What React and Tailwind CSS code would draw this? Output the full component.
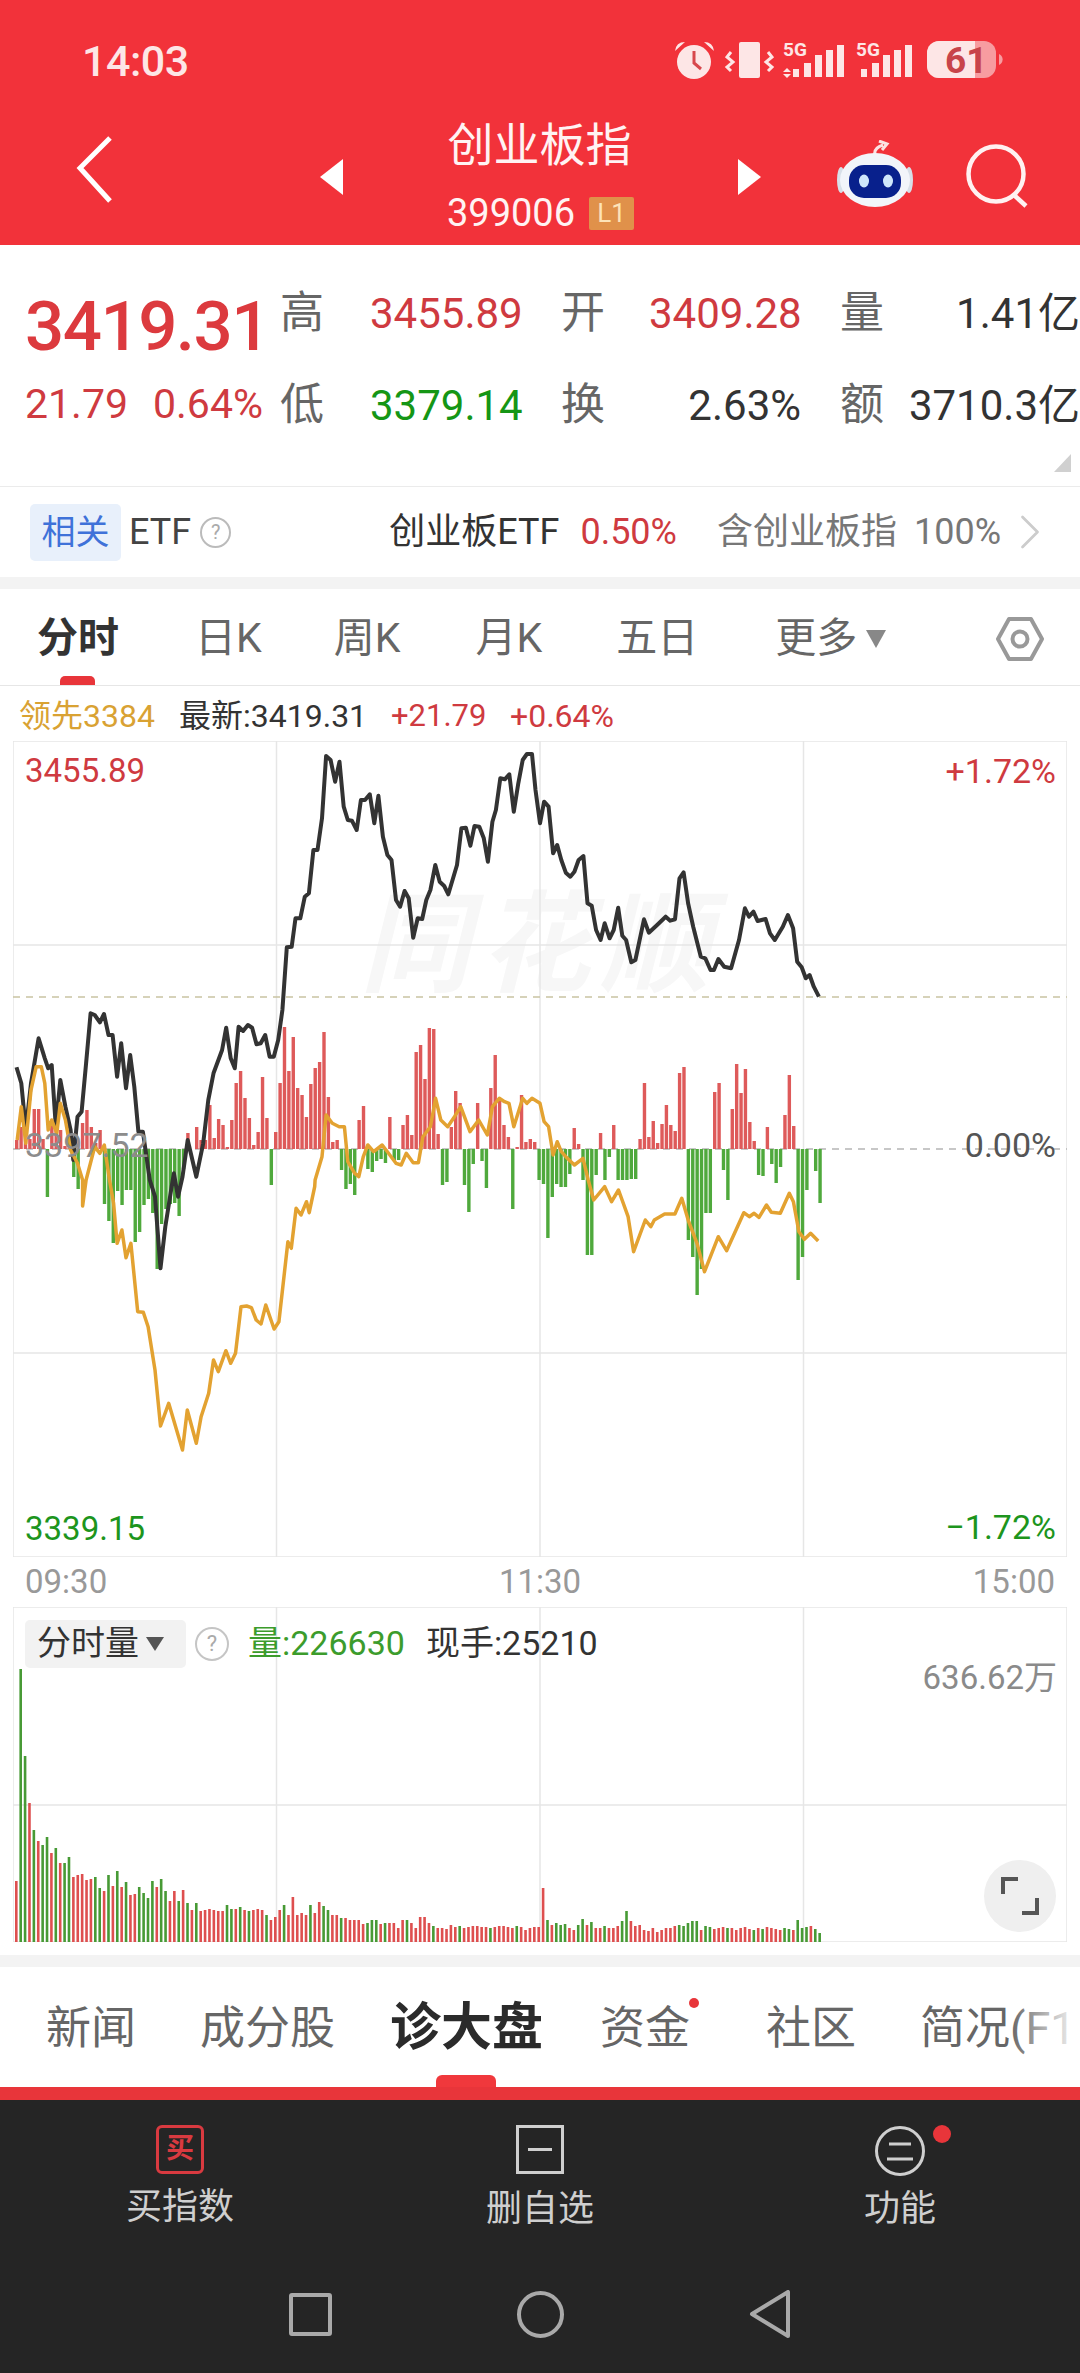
import { ChevronRight } from 'lucide-react'

// points read off the reference crops, stored in crop units and converted to page pixels
const z3 = (pts) => pts.map(([x, y]) => [x / 2.904, 730 + y / 3])
const z4 = (pts) => pts.map(([x, y]) => [540 + x / 2.904, 730 + y / 3])
const z5 = (pts) => pts.map(([x, y]) => [x / 1.452, 1180 + y / 3])
const toPoints = (pts) => pts.map(([x, y]) => `${x.toFixed(1)},${y.toFixed(1)}`).join(' ')

const priceLine = [
  ...z3([[48,1012],[62,1060],[75,1200],[90,1060],[112,925],[130,985],[140,1015],[150,1005],[162,1190],[175,1050],[190,1130],[205,1200],[213,1290],[225,1160],[237,1145],[250,1000],[263,850],[275,855],[290,877],[302,852],[315,915],[327,915],[340,1040],[352,940],[366,1075],[378,975],[390,1070],[402,1205],[415,1205],[435,1350]]),
  ...z5([[225,50],[233,265],[240,140],[250,10]]),
  ...z3([[505,1330],[517,1400],[530,1340],[545,1230],[570,1340],[590,1240],[605,1110],[620,1030],[645,960],[657,893],[670,985],[682,1015],[693,890],[706,903],[720,885],[732,893],[745,943],[757,940],[770,915],[783,980],[795,980],[808,930],[820,840],[833,652],[847,650],[858,565],[872,565],[885,500],[897,490],[910,360],[922,360],[935,265],[947,78],[960,90],[973,155],[986,95],[998,230],[1010,270],[1022,272],[1036,300],[1048,210],[1060,210],[1074,193],[1087,280],[1099,197],[1112,320],[1125,375],[1137,390],[1150,510],[1162,530],[1175,483],[1187,505],[1200,623],[1213,565],[1226,567],[1238,510],[1250,480],[1264,405],[1277,455],[1290,468],[1302,493],[1327,405],[1340,295],[1353,293],[1366,347],[1378,288],[1392,290],[1405,325],[1417,395],[1430,275],[1440,240],[1453,145],[1466,148],[1479,133],[1492,245],[1505,160],[1518,90],[1530,72],[1545,72],[1555,180]]),
  ...z4([[0,280],[12,215],[25,230],[38,370],[50,345],[62,390],[75,428],[88,440],[100,425],[112,390],[126,378],[138,520],[150,527],[163,600],[176,630],[188,580],[202,625],[214,600],[227,533],[239,617],[250,630],[265,697],[277,690],[302,568],[316,608],[340,585],[365,560],[378,572],[392,568],[405,445],[417,427],[430,520],[445,590],[467,680],[480,685],[495,720],[505,720],[518,687],[535,710],[555,715],[578,630],[595,535],[607,560],[620,545],[632,573],[655,567],[668,610],[682,630],[705,590],[720,555],[735,595],[747,695],[760,712],[772,745],[783,735],[795,770],[810,800]]),
]

const leadLine = [
  ...z3([[50,1230],[62,1130],[75,1240],[90,1080],[105,1010],[120,1010],[130,1060],[140,1200],[150,1170],[165,1210],[175,1120],[190,1170],[205,1260],[225,1300],[240,1350]]),
  ...z5([[120,78]]),
  ...z3([[250,1350],[275,1250],[290,1270],[303,1245],[318,1350]]),
  ...z5([[165,70],[170,190],[177,150],[183,233],[190,190],[200,395],[208,397],[215,440],[225,570],[233,738],[245,670],[265,810],[272,690],[285,790],[292,710],[303,640],[310,540],[317,575],[328,512],[335,550],[342,520],[350,380],[358,378],[365,383],[372,420],[379,432],[386,375],[398,447],[405,425],[418,185],[423,205],[430,85],[437,105],[445,65],[449,98],[457,20]]),
  ...z3([[915,1350],[935,1280],[947,1155],[965,1180],[985,1190],[1000,1190],[1010,1295],[1030,1330],[1042,1340],[1055,1280],[1068,1245],[1085,1265],[1110,1245],[1125,1265],[1150,1300],[1165,1305],[1180,1270],[1200,1298],[1215,1298],[1228,1220],[1250,1190],[1265,1105],[1280,1170],[1300,1190],[1320,1160],[1338,1130],[1365,1205],[1390,1170],[1415,1215],[1430,1130],[1450,1105],[1465,1115],[1478,1120],[1492,1190],[1518,1105],[1530,1120],[1545,1105]]),
  ...z4([[0,1120],[12,1175],[25,1190],[38,1275],[50,1235],[62,1265],[75,1280],[100,1305],[125,1285],[140,1350]]),
  ...z5([[862,60],[878,20],[888,65],[898,30],[912,110],[920,215],[937,120],[945,140],[950,120],[965,102],[980,102],[990,55],[1000,125],[1012,190],[1023,275],[1043,170],[1055,212],[1080,98],[1088,110],[1095,100],[1102,112],[1113,75],[1120,97],[1133,100],[1146,40],[1152,65],[1160,155],[1168,178],[1177,160],[1188,183]]),
]

// + is a red bar above the zero line, - a green one below
const flow = [9,22,16,10,40,40,10,-48,29,19,19,3,2,-28,-40,26,39,22,6,19,-55,-72,-94,-42,-56,-41,-41,-93,-83,-56,-50,-64,-120,-75,-60,-55,-54,-67,-20,16,0,22,9,9,44,11,30,24,2,29,66,78,51,31,4,17,72,31,-36,17,66,122,78,112,61,54,32,65,81,87,117,52,7,9,-21,-40,-35,-46,29,43,-20,-23,-12,-10,-14,32,-11,-11,24,34,14,97,104,70,121,120,15,-36,-33,22,58,46,-36,-63,-15,46,-12,-39,61,94,49,24,12,-60,2,54,7,10,7,-31,-35,-89,-48,-35,-38,-38,-25,21,5,-31,-106,-106,-26,16,-31,-8,24,-31,-31,-31,-30,-30,10,66,12,28,6,25,44,24,18,76,82,-91,-108,-146,-120,-64,-64,57,66,-21,-51,40,85,56,80,27,8,-26,-27,22,-15,-34,-18,34,74,23,-131,-108,-41,0,-22,-54]

const volume = [61,-273,-186,139,-112,101,-97,-105,89,-94,79,-79,-85,65,67,68,62,63,-65,-54,51,-67,56,-71,55,-60,47,48,-55,-49,-44,-61,55,-63,-51,41,51,-41,52,-39,32,-39,31,32,33,32,31,31,-37,-33,33,-35,32,-31,32,33,32,-27,22,25,32,-37,27,45,27,29,27,-37,29,40,-36,-32,27,27,-24,24,22,22,22,18,-19,-22,-22,18,-19,19,19,14,22,-22,19,14,25,25,19,-16,14,14,13,17,15,-16,14,15,16,16,15,15,-14,15,16,16,15,14,-16,15,12,14,15,15,54,-22,17,-19,-17,-18,14,12,-17,-23,17,-20,14,14,-16,14,14,16,-21,-31,21,16,17,12,11,14,10,12,14,14,16,-17,-16,-19,-21,-21,12,-16,-15,13,14,15,-14,14,12,14,15,13,-12,14,-13,15,14,13,12,-14,-13,12,-22,-14,-15,16,-13,-9]

const STEP = 4.39

function Grid({ top, bottom, mid }) {
  return (
    <g stroke="#e6e6e6" strokeWidth="1.5">
      <line x1="276.5" x2="276.5" y1={top} y2={bottom} />
      <line x1="540" x2="540" y1={top} y2={bottom} />
      <line x1="803.5" x2="803.5" y1={top} y2={bottom} />
      {mid.map((y) => <line key={y} x1="13" x2="1067" y1={y} y2={y} />)}
    </g>
  )
}

function StatusBar() {
  return (
    <div className="h-[108px] flex items-center pt-[14px] pl-[82px] text-[#fde6e6]">
      <span className="text-[43px] font-medium leading-none tracking-[-0.5px]">14:03</span>
      <svg className="ml-[484px]" width="330" height="44" viewBox="670 40 330 44">
        <g fill="#fde6e6">
          <circle cx="691" cy="63" r="17" />
          <path d="M672 52 q1 -9 10 -9 z M711 52 q-1 -9 -10 -9 z" />
          <path d="M691 52 v12 l7 6" fill="none" stroke="#d8474c" strokeWidth="3" />
          <rect x="736" y="43" width="21" height="36" rx="2" />
          <path d="M728 53 l-4 5 6 5 -6 5 4 4 M765 53 l4 5 -6 5 6 5 -4 4" fill="none" stroke="#fde6e6" strokeWidth="3" />
          <rect x="790" y="70" width="6" height="8" />
          <rect x="801" y="64" width="7" height="14" />
          <rect x="812" y="56" width="7" height="22" />
          <rect x="823" y="51" width="7" height="27" />
          <rect x="834" y="46" width="7" height="32" />
          <path d="M784 69 l4 4 h-8 z M784 79 l4 -4 h-8 z" />
          <rect x="858" y="70" width="6" height="8" />
          <rect x="869" y="64" width="7" height="14" />
          <rect x="880" y="56" width="7" height="22" />
          <rect x="891" y="51" width="7" height="27" />
          <rect x="902" y="46" width="7" height="32" />
          <rect x="924" y="42" width="69" height="37" rx="12" fill="#f79ca0" />
          <path d="M936 42 h36 v37 h-36 a12 12 0 0 1 -12 -12 v-13 a12 12 0 0 1 12 -12 z" />
          <path d="M996 55 a6 6 0 0 1 0 11 z" fill="#f79ca0" />
          <text x="780" y="57" fontSize="19" fontWeight="700">5G</text>
          <text x="853" y="57" fontSize="19" fontWeight="700">5G</text>
          <text x="942" y="74" fontSize="37" fontWeight="700" fill="#c8444a">61</text>
        </g>
      </svg>
    </div>
  )
}

function NavBar() {
  return (
    <div className="relative h-[137px]">
      <svg className="absolute left-[70px] top-[25px]" width="50" height="75" viewBox="0 0 50 75">
        <path d="M40 5 L10 35 L40 68" fill="none" stroke="#fff" strokeWidth="5" />
      </svg>
      <div className="flex justify-center items-center h-full">
        <span className="w-0 h-0 border-y-[18px] border-y-transparent border-r-[23px] border-r-white mr-[105px]" />
        <div className="flex flex-col items-center w-[184px] self-start pt-[12px]">
          <span className="text-[46px] leading-[50px] text-[#fff3f3] whitespace-nowrap">创业板指</span>
          <div className="flex items-center gap-[14px] mt-[24px] ml-[2px]">
            <span className="text-[38px] leading-[38px] text-[#fff3f3]">399006</span>
            <span className="w-[45px] h-[33px] rounded-[2px] bg-[#e0914a] text-[#fde3b8] text-[26px] leading-[33px] text-center">L1</span>
          </div>
        </div>
        <span className="w-0 h-0 border-y-[18px] border-y-transparent border-l-[23px] border-l-white ml-[106px]" />
      </div>
      <svg className="absolute left-[836px] top-[32px]" width="78" height="70" viewBox="0 0 78 70">
        <path d="M39 16 q-2 -8 8 -11 M43 1 l8 3 -5 6" fill="none" stroke="#fbe3e3" strokeWidth="3" />
        <ellipse cx="5" cy="40" rx="4" ry="13" fill="#d7dfe8" />
        <ellipse cx="73" cy="40" rx="4" ry="13" fill="#d7dfe8" />
        <ellipse cx="39" cy="40" rx="35" ry="27" fill="#f2f5fa" />
        <rect x="13" y="25" width="52" height="33" rx="15" fill="#08208c" />
        <ellipse cx="28" cy="41" rx="5" ry="6.5" fill="#cfe6fb" />
        <ellipse cx="52" cy="41" rx="5" ry="6.5" fill="#cfe6fb" />
      </svg>
      <svg className="absolute left-[964px] top-[34px]" width="68" height="66" viewBox="0 0 68 66">
        <circle cx="32" cy="32" r="27.5" fill="none" stroke="#fff1f1" strokeWidth="4.5" />
        <path d="M50 53 l12 11" fill="none" stroke="#fff1f1" strokeWidth="4.5" />
      </svg>
    </div>
  )
}

function Quote() {
  return (
    <div className="relative h-[242px] bg-white pl-[25px] border-b border-[#ebebeb]">
      <div className="pt-[22px] grid grid-cols-[255px_90px_152px_39px_88px_152px_39px_240px] grid-rows-[92px_92px] items-center text-[42px] text-[#333]">
        <span className="text-[69px] font-medium tracking-[-1.5px] text-[#dc3a3e] pt-[26px] leading-none">3419.31</span>
        <span className="text-[#666] text-[44px]">高</span>
        <span className="text-[#cf3a40]">3455.89</span>
        <span />
        <span className="text-[#666] text-[44px]">开</span>
        <span className="text-[#cf3a40] text-right">3409.28</span>
        <span />
        <div className="flex justify-between items-center"><span className="text-[#666] text-[44px]">量</span><span>1.41亿</span></div>

        <div className="flex gap-[25px] text-[#cf3a40] text-[41px]"><span>21.79</span><span>0.64%</span></div>
        <span className="text-[#666] text-[44px]">低</span>
        <span className="text-[#159615]">3379.14</span>
        <span />
        <span className="text-[#666] text-[44px]">换</span>
        <span className="text-right">2.63%</span>
        <span />
        <div className="flex justify-between items-center"><span className="text-[#666] text-[44px]">额</span><span>3710.3亿</span></div>
      </div>
      <span className="absolute right-[9px] bottom-[14px] w-0 h-0 border-l-[17px] border-l-transparent border-b-[18px] border-b-[#d0d0d0]" />
    </div>
  )
}

function EtfRow() {
  return (
    <div className="h-[90px] flex items-center pl-[30px] text-[36px]">
      <span className="w-[91px] h-[57px] bg-[#e8f0fb] rounded-[5px] text-[#3f72d9] text-[34px] text-center leading-[57px]">相关</span>
      <span className="ml-[8px] text-[#444]">ETF</span>
      <span className="ml-[9px] w-[31px] h-[31px] rounded-full border-2 border-[#bbb] text-[#aaa] text-[20px] leading-[27px] text-center">?</span>
      <span className="ml-[158px] text-[#333]">创业板ETF</span>
      <span className="ml-[21px] text-[#cf3a40]">0.50%</span>
      <span className="ml-[40px] text-[#777]">含创业板指</span>
      <span className="ml-[17px] text-[#777]">100%</span>
      <ChevronRight className="-ml-[1px] text-[#ccc]" size={60} strokeWidth={1.1} />
    </div>
  )
}

function PeriodTabs() {
  const tabs = [['日K', 'ml-[76px]'], ['周K', 'ml-[72px]'], ['月K', 'ml-[75px]'], ['五日', 'ml-[74px]'], ['更多', 'ml-[77px]']]
  return (
    <div className="relative h-[97px] flex items-center pl-[37px] pt-[4px] text-[41px] text-[#666] border-b border-[#e6e6e6]">
      <span className="font-bold text-[#333]">分时</span>
      {tabs.map(([t, cls]) => <span key={t} className={cls}>{t}</span>)}
      <span className="ml-[9px] w-0 h-0 border-x-[10px] border-x-transparent border-t-[18px] border-t-[#888]" />
      <svg className="ml-[110px]" width="48" height="46" viewBox="0 0 48 46">
        <path d="M13 3 H35 L46 23 L35 43 H13 L2 23 Z" fill="none" stroke="#999" strokeWidth="4" strokeLinejoin="round" />
        <circle cx="24" cy="23" r="7.5" fill="none" stroke="#999" strokeWidth="4" />
      </svg>
      <span className="absolute left-[60px] bottom-0 w-[35px] h-[9px] rounded-t-[5px] bg-[#e8353a]" />
    </div>
  )
}

function Legend() {
  return (
    <div className="h-[55px] flex items-center pl-[19px] pt-[5px] text-[32px] text-[#333]">
      <span className="text-[#d9a233] w-[160px]">领先3384</span>
      <span className="w-[212px]">最新:3419.31</span>
      <span className="text-[#cf3a40] w-[119px] text-[31px]">+21.79</span>
      <span className="text-[#cf3a40]">+0.64%</span>
    </div>
  )
}

function TimeChart() {
  return (
    <div className="relative ml-[13px] w-[1054px] h-[816px] text-[33px]">
      <span className="absolute left-[347px] top-[122px] text-[110px] font-bold italic text-[#f7f7f7] tracking-[10px]">同花顺</span>
      <svg className="absolute inset-0" width="1054" height="816" viewBox="13 741 1054 816">
        <Grid top={741} bottom={1557} mid={[945, 1353]} />
        <rect x="13" y="741" width="1054" height="816" fill="none" stroke="#e6e6e6" strokeWidth="1.5" />
        <line x1="13" x2="1067" y1="997" y2="997" stroke="#c9c3a3" strokeWidth="1.5" strokeDasharray="7 6" />
        <line x1="13" x2="1067" y1="1149" y2="1149" stroke="#b5b5b5" strokeWidth="1.5" strokeDasharray="7 6" />
        {flow.map((v, i) => v !== 0 && (
          <rect
            key={i}
            x={15 + i * STEP}
            y={v > 0 ? 1149 - v : 1149}
            width="3.4"
            height={Math.abs(v)}
            fill={v > 0 ? '#de5a5a' : '#4fa93c'}
          />
        ))}
        <polyline points={toPoints(priceLine)} fill="none" stroke="#333" strokeWidth="4" strokeLinejoin="round" />
        <polyline points={toPoints(leadLine)} fill="none" stroke="#e3a231" strokeWidth="3.5" strokeLinejoin="round" />
      </svg>
      <span className="absolute left-[12px] top-[5px] text-[#cf3a40]">3455.89</span>
      <span className="absolute right-[11px] top-[5px] text-[#cf3a40] text-[34px]">+1.72%</span>
      <span className="absolute left-[12px] top-[379px] text-[#8c8c8c] text-[34px]">3397.52</span>
      <span className="absolute right-[11px] top-[385px] text-[#555] text-[34px] leading-[38px]">0.00%</span>
      <span className="absolute left-[12px] bottom-[4px] text-[#1d951d]">3339.15</span>
      <span className="absolute right-[11px] bottom-[4px] text-[#1d951d] text-[34px]">−1.72%</span>
    </div>
  )
}

function VolumeChart() {
  return (
    <div className="relative ml-[13px] w-[1054px] h-[335px] text-[34px]">
      <svg className="absolute inset-0" width="1054" height="335" viewBox="13 1607 1054 335">
        <Grid top={1607} bottom={1942} mid={[1805]} />
        <rect x="13" y="1607" width="1054" height="335" fill="none" stroke="#e6e6e6" strokeWidth="1.5" />
        {volume.map((v, i) => (
          <rect
            key={i}
            x={15 + i * STEP}
            y={1942 - Math.abs(v)}
            width="2.6"
            height={Math.abs(v)}
            fill={v > 0 ? '#de4f4f' : '#479a35'}
          />
        ))}
      </svg>
      <div className="absolute left-[12px] top-[11px] flex items-center">
        <div className="w-[161px] h-[48px] rounded-[5px] bg-[#f2f2f2] flex items-center pl-[12px] text-[#333] whitespace-nowrap">
          分时量
          <span className="ml-[7px] w-0 h-0 border-x-[9px] border-x-transparent border-t-[14px] border-t-[#555]" />
        </div>
        <span className="ml-[9px] w-[34px] h-[34px] rounded-full border-2 border-[#c5c5c5] text-[#aaa] text-[22px] leading-[30px] text-center">?</span>
        <span className="ml-[19px] text-[#3c9c2c]">量:226630</span>
        <span className="ml-[21px] text-[#333]">现手:25210</span>
      </div>
      <span className="absolute right-[10px] top-[46px] text-[#8a8a8a] text-[33px]">636.62万</span>
      <button className="absolute right-[11px] bottom-[10px] w-[72px] h-[72px] rounded-full bg-[#efefef] flex items-center justify-center">
        <svg width="40" height="40" viewBox="0 0 40 40">
          <path d="M3 18 V3 H18 M37 22 V37 H22" fill="none" stroke="#555" strokeWidth="4" />
        </svg>
      </button>
    </div>
  )
}

function InfoTabs() {
  return (
    <div className="relative h-[120px] flex items-center pl-[46px] pt-[3px] text-[45px] text-[#666] overflow-hidden">
      <span>新闻</span>
      <span className="ml-[64px]">成分股</span>
      <span className="ml-[55px] text-[51px] font-bold text-[#2b2b2b]">诊大盘</span>
      <span className="relative ml-[57px]">
        资金
        <span className="absolute -right-[9px] top-[3px] w-[10px] h-[10px] rounded-full bg-[#e8353a]" />
      </span>
      <span className="ml-[76px]">社区</span>
      <span className="ml-[64px] whitespace-nowrap">简况(F1</span>
      <span className="absolute right-0 top-0 h-full w-[70px] bg-gradient-to-r from-transparent to-white" />
      <span className="absolute left-[436px] bottom-0 w-[60px] h-[12px] rounded-t-[6px] bg-[#f0383c]" />
    </div>
  )
}

function BottomBar() {
  return (
    <div className="h-[273px] bg-[#252525] text-[#cfcfcf]">
      <div className="flex h-[135px] pt-[25px] text-[36px] leading-[40px]">
        <div className="w-[360px] flex flex-col items-center">
          <div className="w-[48px] h-[49px] rounded-[6px] border-[3px] border-[#d93a40] text-[#d93a40] text-[28px] leading-[42px] text-center font-bold">买</div>
          <span className="mt-[13px]">买指数</span>
        </div>
        <div className="w-[360px] flex flex-col items-center">
          <div className="w-[48px] h-[49px] border-[3px] border-[#cfcfcf] flex items-center justify-center">
            <span className="w-[24px] h-[3px] bg-[#cfcfcf]" />
          </div>
          <span className="mt-[15px]">删自选</span>
        </div>
        <div className="w-[360px] flex flex-col items-center">
          <div className="relative">
            <svg width="50" height="52" viewBox="0 0 50 52">
              <circle cx="25" cy="26" r="23.5" fill="none" stroke="#cfcfcf" strokeWidth="3" />
              <path d="M14 19 H36 M12 34 H38" stroke="#cfcfcf" strokeWidth="3" />
            </svg>
            <span className="absolute left-[58px] top-0 w-[18px] h-[18px] rounded-full bg-[#e8353a]" />
          </div>
          <span className="mt-[12px]">功能</span>
        </div>
      </div>
      <div className="flex items-center justify-center pt-[55px] gap-[185px]">
        <span className="w-[43px] h-[43px] rounded-[3px] border-4 border-[#a9a9a9]" />
        <span className="w-[47px] h-[47px] rounded-full border-4 border-[#a9a9a9]" />
        <svg width="42" height="48" viewBox="0 0 42 48">
          <path d="M39 2 V46 L3 24 Z" fill="none" stroke="#a9a9a9" strokeWidth="4" strokeLinejoin="round" />
        </svg>
      </div>
    </div>
  )
}

export default function App() {
  return (
    <div className="w-[1080px] h-[2373px] overflow-hidden bg-white font-[Roboto,'Noto_Sans_CJK_SC',sans-serif]">
      <div className="h-[245px] bg-[#f2323a]">
        <StatusBar />
        <NavBar />
      </div>
      <Quote />
      <EtfRow />
      <div className="h-[12px] bg-[#f3f3f3]" />
      <PeriodTabs />
      <Legend />
      <TimeChart />
      <div className="h-[50px] flex items-center justify-between px-[25px] text-[33px] text-[#999]">
        <span>09:30</span>
        <span>11:30</span>
        <span>15:00</span>
      </div>
      <VolumeChart />
      <div className="h-[13px]" />
      <div className="h-[12px] bg-[#f3f3f3]" />
      <InfoTabs />
      <div className="h-[13px] bg-[#e8353a]" />
      <BottomBar />
    </div>
  )
}
